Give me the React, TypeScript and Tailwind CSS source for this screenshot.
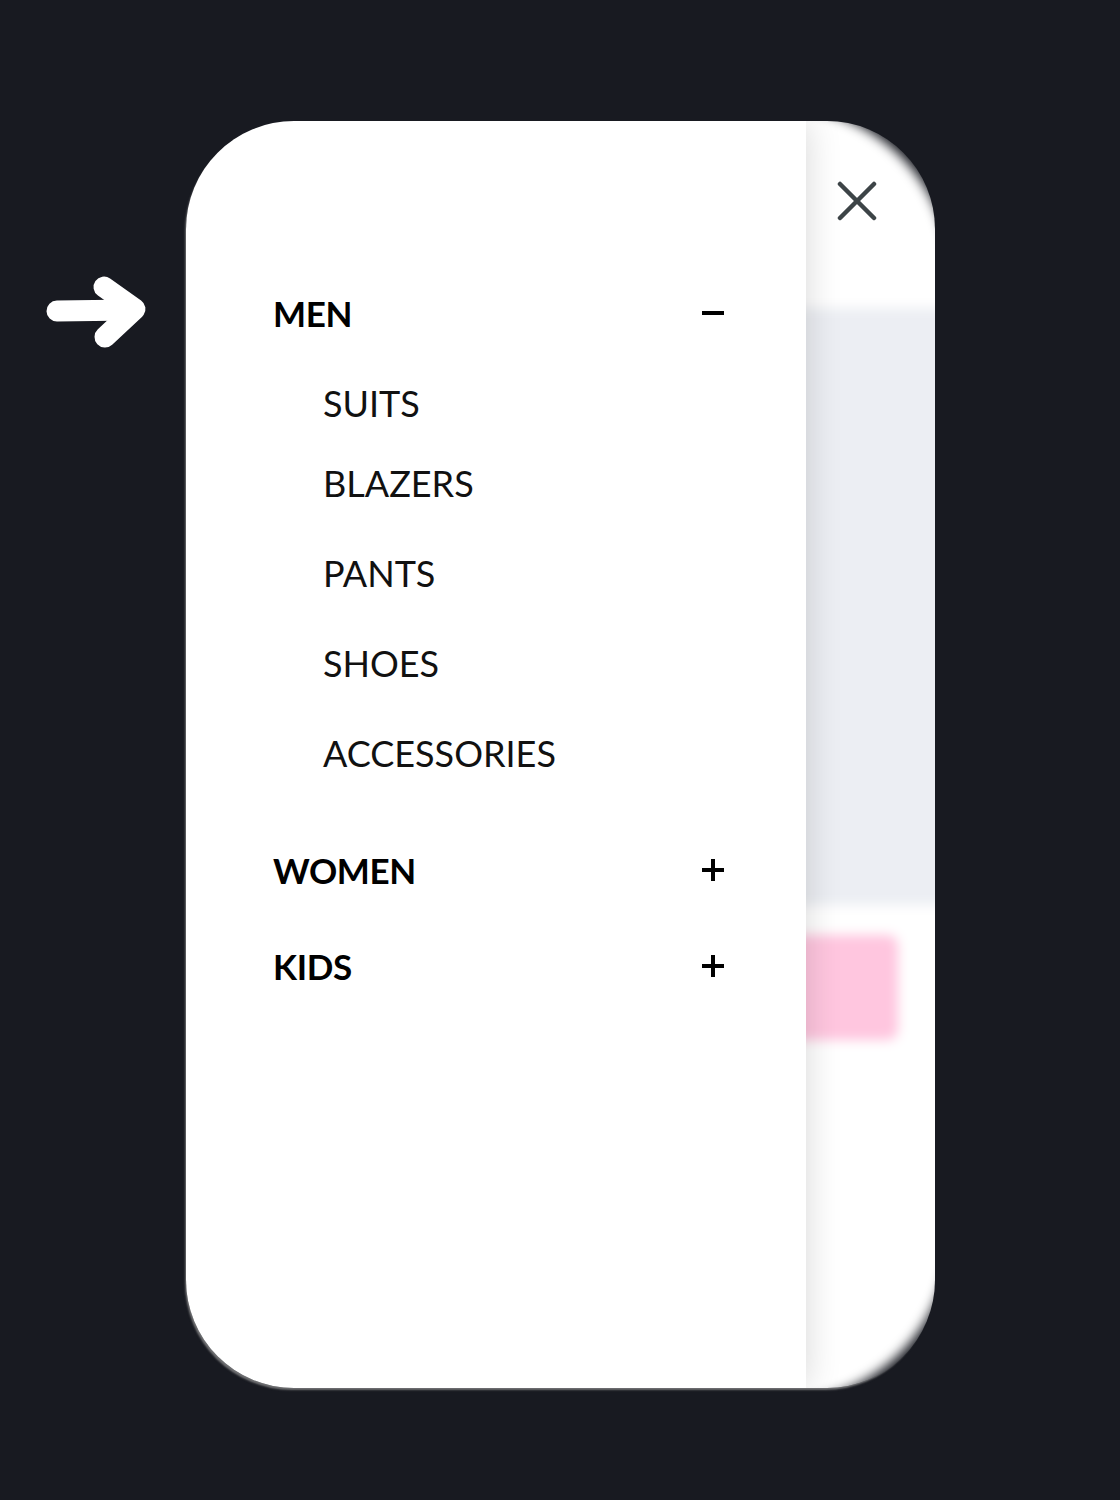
import React from "react";

const subItems = ["SUITS", "BLAZERS", "PANTS", "SHOES", "ACCESSORIES"];

function PointerArrow() {
  return (
    <svg width="120" height="100" viewBox="0 0 120 100" className="block">
      <g
        fill="none"
        stroke="#ffffff"
        strokeWidth="21"
        strokeLinecap="round"
        strokeLinejoin="round"
      >
        <path d="M20 46 L94 45" />
        <path d="M67 22 L98 44 L68 72" />
      </g>
    </svg>
  );
}

function CloseIcon() {
  return (
    <svg width="40" height="40" viewBox="0 0 40 40">
      <g stroke="#3d4447" strokeWidth="4.5" strokeLinecap="round">
        <path d="M3 3 L37 37" />
        <path d="M37 3 L3 37" />
      </g>
    </svg>
  );
}

function Minus() {
  return <span className="block h-[4px] w-[22px] bg-black" />;
}

function Plus() {
  return (
    <span className="relative block h-[22px] w-[22px]">
      <span className="absolute left-0 top-[9px] h-[4px] w-[22px] bg-black" />
      <span className="absolute left-[9px] top-0 h-[22px] w-[4px] bg-black" />
    </span>
  );
}

function CategoryRow({ label, open }: { label: string; open?: boolean }) {
  return (
    <div className="flex h-[60px] items-center justify-between">
      <span className="text-[35px] font-bold leading-none tracking-[-0.01em] text-black">
        {label}
      </span>
      {open ? <Minus /> : <Plus />}
    </div>
  );
}

export default function App() {
  return (
    <div
      className="flex min-h-[1500px] w-full items-start bg-[#181a21] pl-[37px] pt-[121px]"
      style={{ fontFamily: "Lato, 'Open Sans', sans-serif" }}
    >
      {/* pointer */}
      <div className="mt-[144px] w-[149px] shrink-0">
        <PointerArrow />
      </div>

      {/* menu card */}
      <div className="relative flex h-[1267px] w-[749px] overflow-hidden rounded-[108px] shadow-[-2px_3px_2px_-1px_rgba(150,150,150,0.7)]">
        {/* drawer */}
        <div className="relative z-10 flex w-[620px] shrink-0 flex-col bg-white pl-[87px] pr-[82px] pt-[162px] shadow-[0_0_34px_rgba(0,0,0,0.16)]">
          <CategoryRow label="MEN" open />

          <div className="flex flex-col pl-[50px] pt-[30px]">
            {subItems.map((item, i) => (
              <div
                key={item}
                className={`flex h-[60px] items-center ${i === 0 ? "" : i === 1 ? "mt-[20px]" : "mt-[30px]"}`}
              >
                <span className="text-[36px] font-normal leading-none text-[#111]">
                  {item}
                </span>
              </div>
            ))}
          </div>

          <div className="mt-[57px]">
            <CategoryRow label="WOMEN" />
          </div>
          <div className="mt-[36px]">
            <CategoryRow label="KIDS" />
          </div>
        </div>

        {/* blurred page behind the drawer */}
        <div className="relative flex-1">
          <div className="absolute -bottom-[15px] -left-[200px] -right-[15px] -top-[15px] flex flex-col overflow-hidden rounded-r-[170px] bg-white blur-[6px]">
            <div className="h-[202px] shrink-0" />
            <div className="h-[597px] shrink-0 bg-[#eceef3]" />
            <div className="h-[30px] shrink-0" />
            <div className="h-[105px] w-[292px] shrink-0 rounded-[10px] bg-[#ffc6df]" />
          </div>
          <button className="absolute left-[31px] top-[60px]">
            <CloseIcon />
          </button>
        </div>
      </div>
    </div>
  );
}
